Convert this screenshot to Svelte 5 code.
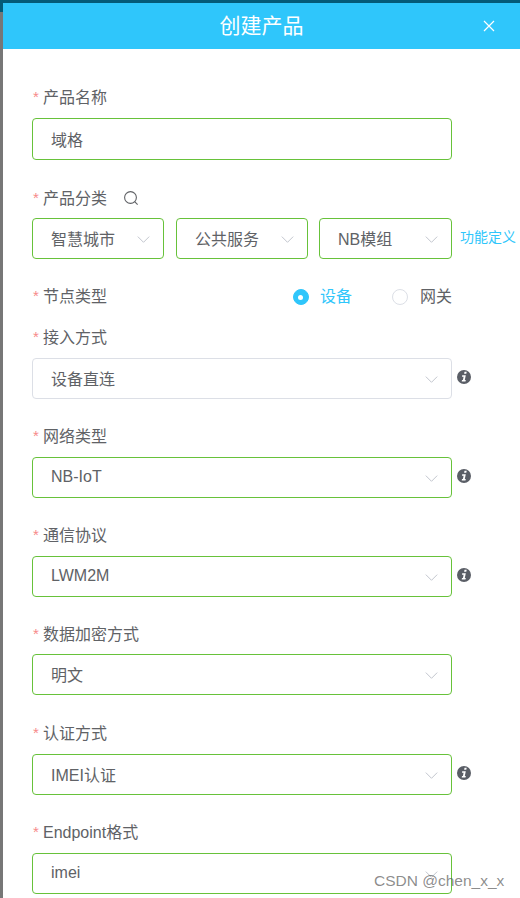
<script>
  const fields = [
    { label: '接入方式', value: '设备直连', info: true, plain: true },
    { label: '网络类型', value: 'NB-IoT', info: true },
    { label: '通信协议', value: 'LWM2M', info: true },
    { label: '数据加密方式', value: '明文', nudge: true },
    { label: '认证方式', value: 'IMEI认证', info: true },
    { label: 'Endpoint格式', value: 'imei' }
  ];
  const cats = ['智慧城市', '公共服务', 'NB模组'];
</script>

<div class="page">
  <div class="topline"></div>
  <div class="main">
    <div class="backdrop"></div>
    <div class="drawer">
      <header class="head">
        <h1>创建产品</h1>
        <svg class="close" viewBox="0 0 12 12" width="12" height="12" aria-label="关闭">
          <path d="M1 1 11 11M11 1 1 11" stroke="#fff" stroke-width="1.2" fill="none" />
        </svg>
      </header>
      <form class="form">
        <div class="item first">
          <div class="label"><i>*</i>产品名称</div>
          <div class="box tall"><span>域格</span></div>
        </div>

        <div class="item cat">
          <div class="label">
            <i>*</i>产品分类
            <svg class="search" viewBox="0 0 16 16" width="16" height="16">
              <circle cx="7.5" cy="7.5" r="5.9" stroke="#606266" stroke-width="1.1" fill="none" />
              <path d="M11.7 11.7 14.6 14.6" stroke="#606266" stroke-width="1.1" fill="none" />
            </svg>
          </div>
          <div class="catrow">
            {#each cats as c}
              <div class="box">
                <span>{c}</span>
                <svg class="chev" viewBox="0 0 14 8" width="13" height="7"><path d="M.5 .7 7 7.2 13.5 .7" stroke="#c0c4cc" stroke-width="1.1" fill="none" /></svg>
              </div>
            {/each}
            <a class="define" href="#top">功能定义</a>
          </div>
        </div>

        <div class="item node">
          <div class="label"><i>*</i>节点类型</div>
          <div class="radios">
            <span class="radio on"><b></b>设备</span>
            <span class="radio"><b></b>网关</span>
          </div>
        </div>

        {#each fields as f}
          <div class="item field" class:nudge={f.nudge}>
            <div class="label"><i>*</i>{f.label}</div>
            <div class="ctl">
              <div class="box" class:plain={f.plain}>
                <span>{f.value}</span>
                <svg class="chev" viewBox="0 0 14 8" width="13" height="7"><path d="M.5 .7 7 7.2 13.5 .7" stroke="#c0c4cc" stroke-width="1.1" fill="none" /></svg>
              </div>
              {#if f.info}
                <svg class="info" viewBox="0 0 14 14" width="14" height="14">
                  <circle cx="7" cy="7" r="7" fill="#5a5e66" />
                  <path d="M7.5 1.8h2.2l-.4 2H7.1zM5.2 5.2h3.6L7.8 10h1l-.3 1.6H4.7L5 10h.9l.7-3.2H5z" fill="#fff" />
                </svg>
              {/if}
            </div>
          </div>
        {/each}
      </form>
    </div>
  </div>
  <div class="mark">CSDN @chen_x_x</div>
</div>

<style>
  :global(body) { margin: 0; }
  .page {
    position: relative;
    width: 520px;
    height: 898px;
    overflow: hidden;
    background: #fff;
    font-family: "Liberation Sans", "Noto Sans CJK SC", sans-serif;
    font-size: 16px;
    color: #606266;
  }
  .topline { height: 3px; background: #045a78; }
  .main { display: flex; height: 895px; }
  .backdrop {
    width: 3px;
    flex: none;
    background: linear-gradient(#045a78 9px, #777 9px);
  }
  .drawer { flex: 1; min-width: 0; }
  .head {
    height: 46px;
    background: #2fc6fb;
    display: flex;
    align-items: center;
    justify-content: center;
    position: relative;
  }
  h1 { margin: 0; font-size: 21px; font-weight: 400; color: #fff; line-height: 46px; }
  .close { position: absolute; right: 25px; top: 17px; }
  .form { padding: 38px 0 0 29px; }
  .label { height: 22px; line-height: 22px; display: flex; align-items: center; }
  .label i {
    width: 11px;
    flex: none;
    padding-left: 1px;
    box-sizing: border-box;
    color: #f78989;
    font-style: normal;
    font-size: 15px;
    margin-top: -2px;
  }
  .box {
    box-sizing: border-box;
    height: 41px;
    flex: none;
    width: 420px;
    border: 1px solid #67c23a;
    border-radius: 4px;
    background: #fff;
    padding: 0 0 1px 18px;
    display: flex;
    align-items: center;
    position: relative;
  }
  .box.plain { border-color: #dcdfe6; }
  .box.tall { height: 42px; margin-top: 9px; padding-bottom: 0; }
  .chev { position: absolute; right: 13px; top: 17px; }
  .item { margin-bottom: 26px; }
  .item.first { margin-bottom: 28px; }
  .search { margin: -2px 0 0 16px; }
  .catrow { display: flex; margin-top: 8px; position: relative; }
  .catrow .box { width: 132px; margin-right: 12px; }
  .catrow .box:nth-child(2) { margin-right: 11px; }
  .catrow .box:nth-child(3) { width: 133px; margin-right: 8px; }
  .define { color: #2fc6fb; font-size: 14px; text-decoration: none; white-space: nowrap; margin-top: 9px; height: 20px; line-height: 20px; }
  .item.cat { margin-bottom: 27px; }
  .item.node { display: flex; justify-content: space-between; width: 420px; margin-bottom: 19px; }
  .radios { display: flex; height: 22px; align-items: center; }
  .radio { display: flex; align-items: center; line-height: 22px; }
  .radio + .radio { margin-left: 40px; }
  .radio b {
    width: 16px;
    height: 16px;
    box-sizing: border-box;
    border: 1px solid #dcdfe6;
    border-radius: 50%;
    margin-right: 12px;
    background: #fff;
    position: relative;
  }
  .radio.on b { margin-right: 11px; }
  .radio.on { color: #2fc6fb; }
  .radio.on b { background: #2fc6fb; border-color: #2fc6fb; }
  .radio.on b::after {
    content: "";
    position: absolute;
    width: 5px;
    height: 5px;
    left: 4.5px;
    top: 4.5px;
    background: #fff;
    border-radius: 50%;
  }
  .ctl { display: flex; align-items: flex-start; margin-top: 9px; }
  .nudge .ctl { margin-top: 8px; }
  .info { margin: 12px 0 0 5px; flex: none; }
  .field { margin-bottom: 27px; height: 72px; }
  .mark {
    position: absolute;
    left: 374px;
    top: 871px;
    font-size: 15.5px;
    line-height: 20px;
    color: rgba(90, 90, 90, .7);
    white-space: nowrap;
  }
</style>
